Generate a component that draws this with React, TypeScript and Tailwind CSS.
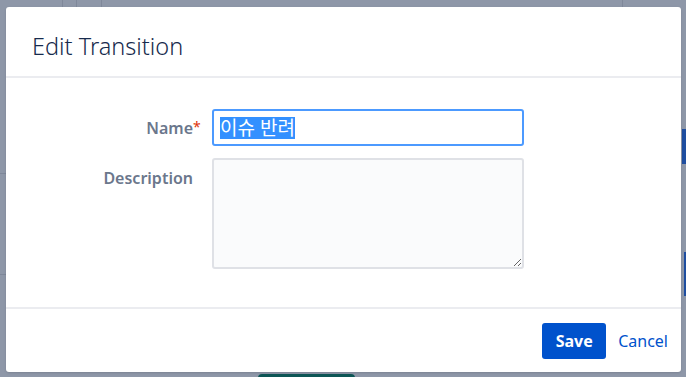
export default function App() {
  return (
    <div className="relative h-[377px] w-[686px] overflow-hidden bg-[#8e97a8] font-['Noto_Sans','Noto_Sans_CJK_KR',sans-serif]">
      {/* dimmed page behind the dialog */}
      <div className="absolute left-[62px] top-0 h-[8px] w-px bg-[#7f889a]" />
      <div className="absolute left-[76px] top-0 h-[8px] w-px bg-[#7f889a]" />
      <div className="absolute left-[101px] top-0 h-[8px] w-px bg-[#7f889a]" />
      <div className="absolute left-[622px] top-0 h-[8px] w-px bg-[#7f889a]" />
      <div className="absolute left-0 top-[173px] h-px w-[6px] bg-[#7f889a]" />
      <div className="absolute left-0 top-[274px] h-px w-[6px] bg-[#7f889a]" />
      <div className="absolute right-0 top-[129px] h-[35px] w-[4px] bg-[#1f4ea0]" />
      <div className="absolute right-0 top-[252px] h-[44px] w-[2px] bg-[#1f4ea0]" />
      <div className="absolute left-[258px] top-[374px] h-[4px] w-[97px] rounded-t bg-[#0d5656]" />

      <div className="absolute left-[6px] top-[7px] flex w-[675px] flex-col rounded-[3px] bg-white shadow-sm">
        {/* Header */}
        <div className="flex h-[69px] items-center px-[26px] pt-[11px]">
          <h2 className="text-[23.5px] font-light text-[#172b4d]">Edit Transition</h2>
        </div>
        <div className="h-[2px] bg-[#ebecf0]" />

        {/* Body */}
        <div className="flex flex-col gap-[12px] pb-[38px] pt-[31px]">
          <div className="flex items-center">
            <label className="w-[194px] pr-[7px] text-right text-[16px] font-semibold text-[#6b778c]">
              <span className="relative">
                Name
                <span className="absolute left-full top-[-1px] text-[14px] font-normal text-[#de350b]">*</span>
              </span>
            </label>
            <div className="ml-[12px] flex h-[37px] w-[312px] items-center rounded-[3px] border-2 border-[#4c9aff] bg-white px-[6px]">
              <span className="bg-[#3390ff] text-[19px] leading-[22px] text-white">이슈 반려</span>
            </div>
          </div>
          <div className="flex items-start">
            <label className="w-[194px] pr-[7px] pt-[8px] text-right text-[16px] font-semibold text-[#6b778c]">
              Description
            </label>
            <textarea className="ml-[12px] h-[111px] w-[312px] rounded-[3px] border-2 border-[#dfe1e6] bg-[#fafbfc]" />
          </div>
        </div>

        <div className="h-[2px] bg-[#ebecf0]" />

        {/* Footer */}
        <div className="flex items-center justify-end gap-[12px] pb-[13px] pr-[13px] pt-[14px]">
          <button className="h-[36px] w-[64px] rounded-[3px] bg-[#0052cc] text-[16px] font-bold text-white">
            Save
          </button>
          <button className="text-[16px] text-[#0052cc]">Cancel</button>
        </div>
      </div>
    </div>
  );
}
